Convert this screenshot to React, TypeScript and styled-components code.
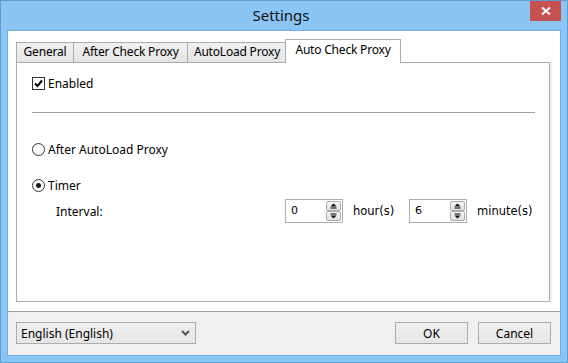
import styled, { createGlobalStyle } from "styled-components";

const GlobalStyle = createGlobalStyle`
  html, body {
    margin: 0;
    padding: 0;
    background: #ffffff;
  }
  * {
    box-sizing: border-box;
  }
`;

const Window = styled.div`
  width: 568px;
  height: 363px;
  background: #8bc5f4;
  border: 1px solid #5f9bd4;
  display: flex;
  flex-direction: column;
  font-family: "Noto Sans", "Open Sans", sans-serif;
  font-size: 12px;
  color: #000;
`;

const TitleBar = styled.div`
  height: 29px;
  display: grid;
  grid-template-columns: 1fr auto 1fr;
  align-items: start;
  padding-right: 6px;
`;

const Title = styled.div`
  grid-column: 2;
  font-size: 15px;
  line-height: 29px;
  color: #111;
`;

const CloseButton = styled.div`
  grid-column: 3;
  justify-self: end;
  width: 31px;
  height: 20px;
  background: #c75050;
  display: flex;
  align-items: center;
  justify-content: center;
`;

const Client = styled.div`
  flex: 1;
  margin: 0 6px 6px;
  border: 1px solid #73ace2;
  background: #ffffff;
  display: flex;
  flex-direction: column;
`;

const TabArea = styled.div`
  padding: 8px 10px 0 8px;
`;

const TabStrip = styled.div`
  display: flex;
  align-items: flex-end;
  position: relative;
  z-index: 1;
  height: 24px;
`;

const Tab = styled.div<{ $active?: boolean; $w: number }>`
  width: ${(p) => p.$w}px;
  height: ${(p) => (p.$active ? 24 : 21)}px;
  margin-left: ${(p) => (p.$active ? -2 : -1)}px;
  border: 1px solid #acacac;
  border-bottom: ${(p) => (p.$active ? "none" : "1px solid #acacac")};
  background: ${(p) =>
    p.$active ? "#ffffff" : "linear-gradient(#f0f0f0, #e5e5e5)"};
  padding-top: ${(p) => (p.$active ? 2 : 1)}px;
  text-align: center;
  line-height: 16px;
  white-space: nowrap;
  letter-spacing: -0.2px;
  position: relative;
  z-index: ${(p) => (p.$active ? 2 : 1)};

  &:first-child {
    margin-left: 0;
  }
`;

const Panel = styled.div`
  height: 240px;
  margin-top: -1px;
  border: 1px solid #acacac;
  box-shadow: 2px 0 0 #f0f0f0;
  background: #ffffff;
  padding: 12px 14px 0 15px;
  display: flex;
  flex-direction: column;
`;

const OptionRow = styled.label<{ $gap: number }>`
  display: flex;
  align-items: center;
  gap: 3px;
  height: 17px;
  margin-top: ${(p) => p.$gap}px;
  line-height: 17px;
`;

const CheckBox = styled.span`
  width: 13px;
  height: 13px;
  border: 1px solid #333333;
  background: #ffffff;
  display: flex;
  align-items: center;
  justify-content: center;
`;

const Radio = styled.span<{ $checked?: boolean }>`
  width: 13px;
  height: 13px;
  border-radius: 50%;
  border: 1px solid #333333;
  background: #ffffff;
  display: flex;
  align-items: center;
  justify-content: center;

  &::after {
    content: "";
    display: ${(p) => (p.$checked ? "block" : "none")};
    width: 5px;
    height: 5px;
    border-radius: 50%;
    background: #1a1a1a;
  }
`;

const Separator = styled.div`
  height: 1px;
  background: #a0a0a0;
  margin-top: 20px;
`;

const IntervalRow = styled.div`
  display: flex;
  align-items: center;
  height: 24px;
  margin-top: 5px;
  padding-left: 24px;
`;

const IntervalLabel = styled.span`
  width: 229px;
`;

const SpinBox = styled.div`
  width: 58px;
  height: 24px;
  border: 1px solid #abadb3;
  display: flex;
  align-items: stretch;
  padding: 1px;
`;

const SpinValue = styled.span`
  flex: 1;
  font-family: "DejaVu Sans", "Liberation Sans", sans-serif;
  font-size: 11px;
  line-height: 20px;
  padding-left: 4px;
`;

const SpinButtons = styled.div`
  width: 15px;
  display: flex;
  flex-direction: column;
`;

const SpinButton = styled.div`
  flex: 1;
  border: 1px solid #acacac;
  border-radius: 2px;
  background: linear-gradient(#f4f4f4, #e1e1e1);
  display: flex;
  align-items: center;
  justify-content: center;
`;

const Unit = styled.span<{ $w?: number }>`
  font-family: "DejaVu Sans", "Liberation Sans", sans-serif;
  font-size: 11.5px;
  margin-left: 10px;
  width: ${(p) => (p.$w ? `${p.$w}px` : "auto")};
`;

const Footer = styled.div`
  flex: 1;
  margin-top: 9px;
  border-top: 1px solid #a0a0a0;
  background: #f0f0f0;
  display: flex;
  align-items: flex-start;
  padding: 10px 9px 0 8px;
  gap: 10px;
`;

const Combo = styled.div`
  width: 180px;
  height: 22px;
  border: 1px solid #acacac;
  background: linear-gradient(#f0f0f0, #e5e5e5);
  display: flex;
  align-items: center;
  justify-content: space-between;
  padding: 0 5px 0 4px;
  margin-right: auto;
`;

const Button = styled.div`
  width: 73px;
  height: 22px;
  border: 1px solid #acacac;
  background: linear-gradient(#f0f0f0, #e5e5e5);
  display: flex;
  align-items: center;
  justify-content: center;
`;

function Spinner({ value }: { value: string }) {
  return (
    <SpinBox>
      <SpinValue>{value}</SpinValue>
      <SpinButtons>
        <SpinButton>
          <svg width="7" height="6" viewBox="0 0 7 6">
            <path d="M3.5 0.5 L6.5 3.5 L0.5 3.5 Z" fill="#000" />
            <rect x="0.5" y="4.5" width="6" height="1" fill="#000" />
          </svg>
        </SpinButton>
        <SpinButton>
          <svg width="7" height="6" viewBox="0 0 7 6">
            <rect x="0.5" y="0.5" width="6" height="1" fill="#000" />
            <path d="M0.5 2.5 L6.5 2.5 L3.5 5.5 Z" fill="#000" />
          </svg>
        </SpinButton>
      </SpinButtons>
    </SpinBox>
  );
}

export default function App() {
  return (
    <>
      <GlobalStyle />
      <Window>
        <TitleBar>
          <Title>Settings</Title>
          <CloseButton>
            <svg width="10" height="8" viewBox="0 0 10 8">
              <path d="M1 0.5 L9 7.5 M9 0.5 L1 7.5" stroke="#fff" strokeWidth="2" />
            </svg>
          </CloseButton>
        </TitleBar>
        <Client>
          <TabArea>
            <TabStrip>
              <Tab $w={58}>General</Tab>
              <Tab $w={115}>After Check Proxy</Tab>
              <Tab $w={100}>AutoLoad Proxy</Tab>
              <Tab $w={116} $active>
                Auto Check Proxy
              </Tab>
            </TabStrip>
            <Panel>
              <OptionRow $gap={0}>
                <CheckBox>
                  <svg width="9" height="9" viewBox="0 0 9 9">
                    <path d="M1 4.5 L3.5 7 L8 1.5" stroke="#000" strokeWidth="2" fill="none" />
                  </svg>
                </CheckBox>
                Enabled
              </OptionRow>
              <Separator />
              <OptionRow $gap={28}>
                <Radio />
                After AutoLoad Proxy
              </OptionRow>
              <OptionRow $gap={19}>
                <Radio $checked />
                Timer
              </OptionRow>
              <IntervalRow>
                <IntervalLabel>Interval:</IntervalLabel>
                <Spinner value="0" />
                <Unit $w={56}>hour(s)</Unit>
                <Spinner value="6" />
                <Unit>minute(s)</Unit>
              </IntervalRow>
            </Panel>
          </TabArea>
          <Footer>
            <Combo>
              <span>English (English)</span>
              <svg width="9" height="6" viewBox="0 0 9 6">
                <path d="M1 1 L4.5 4.5 L8 1" stroke="#555" strokeWidth="2" fill="none" />
              </svg>
            </Combo>
            <Button>OK</Button>
            <Button>Cancel</Button>
          </Footer>
        </Client>
      </Window>
    </>
  );
}
